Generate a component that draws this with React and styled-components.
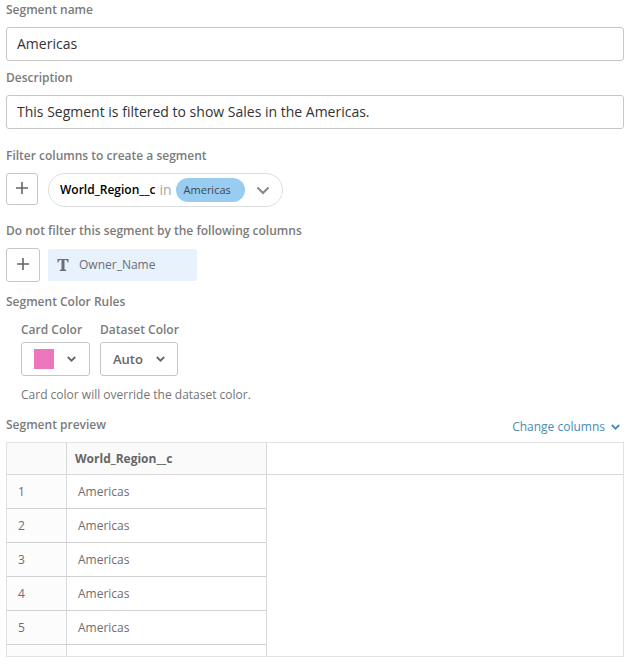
import React from "react";
import styled, { createGlobalStyle } from "styled-components";

const GlobalStyle = createGlobalStyle`
  *, *::before, *::after { box-sizing: border-box; }
  body {
    margin: 0;
    background: #fff;
    color: #757575;
    font-family: "Open Sans", "Noto Sans", sans-serif;
    font-size: 12px;
    line-height: 18px;
  }
  button, input, select { font: inherit; color: inherit; margin: 0; }
`;

const Form = styled.form`
  display: flex;
  flex-direction: column;
  padding: 1px 13px 12px 6px;
`;

const Field = styled.div`
  display: flex;
  flex-direction: column;
  gap: 8px;
  margin-bottom: ${({ $space }) => $space}px;
`;

const Label = styled.label`
  font-weight: 600;
  color: #7b7b7b;
`;

const Heading = styled.h2`
  margin: 0;
  font-size: 12px;
  line-height: 18px;
  font-weight: 600;
  color: #7b7b7b;
`;

const TextInput = styled.input`
  width: 100%;
  height: 34px;
  padding: 0 10px 2px;
  border: 1px solid #c6c6c6;
  border-radius: 3px;
  background: #fff;
  color: #333;
  font-size: 14px;
`;

const Row = styled.div`
  display: flex;
  align-items: ${({ $align }) => $align || "center"};
  gap: ${({ $gap }) => $gap || 8}px;
`;

const AddButton = styled.button`
  display: flex;
  align-items: center;
  justify-content: center;
  width: ${({ $size }) => $size}px;
  height: ${({ $size }) => $size}px;
  padding: 0 0 2px;
  border: 1px solid #c6c6c6;
  border-radius: 3px;
  background: #fff;
  color: #666;
`;

const FilterPill = styled.button`
  display: flex;
  align-items: center;
  height: 34px;
  padding: 0 12px 0 11px;
  border: 1px solid #dedede;
  border-radius: 17px;
  background: #fff;
  color: #888;
`;

const FilterColumn = styled.span`
  color: #000;
  font-weight: 600;
`;

const FilterOperator = styled.span`
  margin: 0 4px;
  color: #a6a6a6;
  font-size: 14px;
`;

const FilterValue = styled.span`
  height: 24px;
  margin-right: 11px;
  padding: 0 14px 0 8px;
  border-radius: 12px;
  background: #98ccf0;
  color: #3b4650;
  font-size: 11px;
  line-height: 24px;
`;

const ColumnTag = styled.div`
  display: flex;
  align-items: center;
  gap: 10px;
  width: 149px;
  height: 32px;
  padding-left: 9px;
  border-radius: 2px;
  background: #e7f2fc;
  color: #6b6f75;
`;

const ColorRules = styled.div`
  display: flex;
  flex-direction: column;
  gap: 10px;
  padding: 2px 0 0 15px;
`;

const ColorOptions = styled.div`
  display: flex;
  gap: 10px;
`;

const ColorOption = styled.div`
  display: flex;
  flex-direction: column;
  align-items: flex-start;
  gap: 3px;
  width: ${({ $width }) => $width}px;
  white-space: nowrap;
`;

const ColorButton = styled.button`
  display: flex;
  align-items: center;
  justify-content: space-between;
  width: 100%;
  height: 34px;
  padding: 0 13px 0 12px;
  border: 1px solid #c6c6c6;
  border-radius: 3px;
  background: #fff;
  color: #666;
`;

const Swatch = styled.span`
  width: 20px;
  height: 20px;
  background: #ee76bd;
`;

const SelectBox = styled.div`
  display: grid;
  align-items: center;
  width: 78px;
  color: #666;

  > * { grid-area: 1 / 1; }
  > svg {
    justify-self: end;
    margin-right: 13px;
    pointer-events: none;
  }
`;

const Select = styled.select`
  appearance: none;
  width: 100%;
  height: 34px;
  padding: 0 28px 0 12px;
  border: 1px solid #c6c6c6;
  border-radius: 3px;
  background: #fff;
  font-size: 13px;
  font-weight: 600;
`;

const Note = styled.p`
  margin: 0;
`;

const PreviewHeader = styled.div`
  display: flex;
  justify-content: space-between;
  margin-bottom: 6px;
`;

const ChangeButton = styled.button`
  display: flex;
  align-items: center;
  gap: 6px;
  padding: 2px 4px 0 0;
  border: 0;
  background: none;
  color: #4a8ab5;
`;

const TableFrame = styled.div`
  border: 1px solid #e2e2e2;
  overflow: hidden;
`;

const Table = styled.table`
  width: 100%;
  table-layout: fixed;
  border-collapse: separate;
  border-spacing: 0;
`;

const Column = styled.col`
  width: ${({ $width }) => $width};
`;

const HeadCell = styled.th`
  height: 32px;
  padding: 0 8px;
  border-bottom: 1px solid #d9d9d9;
  border-right: ${({ $filler }) => ($filler ? "0" : "1px solid #d9d9d9")};
  background: ${({ $filler }) => ($filler ? "#fff" : "#fafafa")};
  color: #666;
  font-weight: 700;
  text-align: left;
`;

const BodyRow = styled.tr`
  height: ${({ $partial }) => ($partial ? 11 : 34)}px;
`;

const Cell = styled.td`
  padding: 0 11px;
  border-right: 1px solid #d9d9d9;
  border-bottom: ${({ $partial }) => ($partial ? "0" : "1px solid #d0d0d0")};
  background: ${({ $index }) => ($index ? "#fcfcfc" : "#fff")};
  color: #6e6e6e;
`;

const FillerCell = styled.td`
  padding: 0;
`;

function Chevron({ width = 9, height = 6, stroke = 1.8 }) {
  return (
    <svg width={width} height={height} viewBox="0 0 9 6" fill="none" aria-hidden="true">
      <path d="M.8 1l3.700 3.700L8.200 1" stroke="currentColor" strokeWidth={stroke} />
    </svg>
  );
}

function Plus() {
  return (
    <svg width="12" height="12" viewBox="0 0 12 12" fill="none" aria-hidden="true">
      <path d="M6 0v12M0 6h12" stroke="currentColor" strokeWidth="1.6" />
    </svg>
  );
}

function TextTypeIcon() {
  return (
    <svg width="12" height="12" viewBox="0 0 12 12" fill="currentColor" aria-hidden="true">
      <path d="M.5 0h11v3.600h-.9C10.300 1.600 9.600 1 7.500 1v8.800c0 .8.400 1.100 1.700 1.200v1H2.800v-1c1.300-.1 1.700-.4 1.700-1.200V1C2.400 1 1.700 1.600 1.400 3.600H.5z" />
    </svg>
  );
}

const rows = ["Americas", "Americas", "Americas", "Americas", "Americas"];

export default function App() {
  return (
    <>
      <GlobalStyle />
      <Form onSubmit={(event) => event.preventDefault()}>
        <Field $space={8}>
          <Label htmlFor="segment-name">Segment name</Label>
          <TextInput id="segment-name" defaultValue="Americas" />
        </Field>
        <Field $space={18}>
          <Label htmlFor="description">Description</Label>
          <TextInput
            id="description"
            defaultValue="This Segment is filtered to show Sales in the Americas."
          />
        </Field>
        <Field $space={15}>
          <Heading>Filter columns to create a segment</Heading>
          <Row $align="flex-start" $gap={10}>
            <AddButton type="button" $size={32} aria-label="Add filter column">
              <Plus />
            </AddButton>
            <FilterPill type="button">
              <FilterColumn>World_Region__c</FilterColumn>
              <FilterOperator>in</FilterOperator>
              <FilterValue>Americas</FilterValue>
              <Chevron width={14} height={9} stroke={1.4} />
            </FilterPill>
          </Row>
        </Field>
        <Field $space={11}>
          <Heading>Do not filter this segment by the following columns</Heading>
          <Row>
            <AddButton type="button" $size={34} aria-label="Add excluded column">
              <Plus />
            </AddButton>
            <ColumnTag>
              <TextTypeIcon />
              <span>Owner_Name</span>
            </ColumnTag>
          </Row>
        </Field>
        <Field $space={12}>
          <Heading>Segment Color Rules</Heading>
          <ColorRules>
            <ColorOptions>
              <ColorOption $width={69}>
                <Label htmlFor="card-color">Card Color</Label>
                <ColorButton id="card-color" type="button">
                  <Swatch />
                  <Chevron />
                </ColorButton>
              </ColorOption>
              <ColorOption $width={80}>
                <Label htmlFor="dataset-color">Dataset Color</Label>
                <SelectBox>
                  <Select id="dataset-color" defaultValue="Auto">
                    <option>Auto</option>
                  </Select>
                  <Chevron />
                </SelectBox>
              </ColorOption>
            </ColorOptions>
            <Note>Card color will override the dataset color.</Note>
          </ColorRules>
        </Field>
        <PreviewHeader>
          <Heading>Segment preview</Heading>
          <ChangeButton type="button">
            Change columns
            <Chevron />
          </ChangeButton>
        </PreviewHeader>
        <TableFrame>
          <Table aria-label="Segment preview">
            <colgroup>
              <Column $width="60px" />
              <Column $width="200px" />
              <Column $width="auto" />
            </colgroup>
            <thead>
              <tr>
                <HeadCell />
                <HeadCell scope="col">World_Region__c</HeadCell>
                <HeadCell $filler />
              </tr>
            </thead>
            <tbody>
              {rows.map((region, index) => (
                <BodyRow key={index}>
                  <Cell $index>{index + 1}</Cell>
                  <Cell>{region}</Cell>
                  <FillerCell />
                </BodyRow>
              ))}
              <BodyRow $partial>
                <Cell $index $partial />
                <Cell $partial />
                <FillerCell />
              </BodyRow>
            </tbody>
          </Table>
        </TableFrame>
      </Form>
    </>
  );
}
